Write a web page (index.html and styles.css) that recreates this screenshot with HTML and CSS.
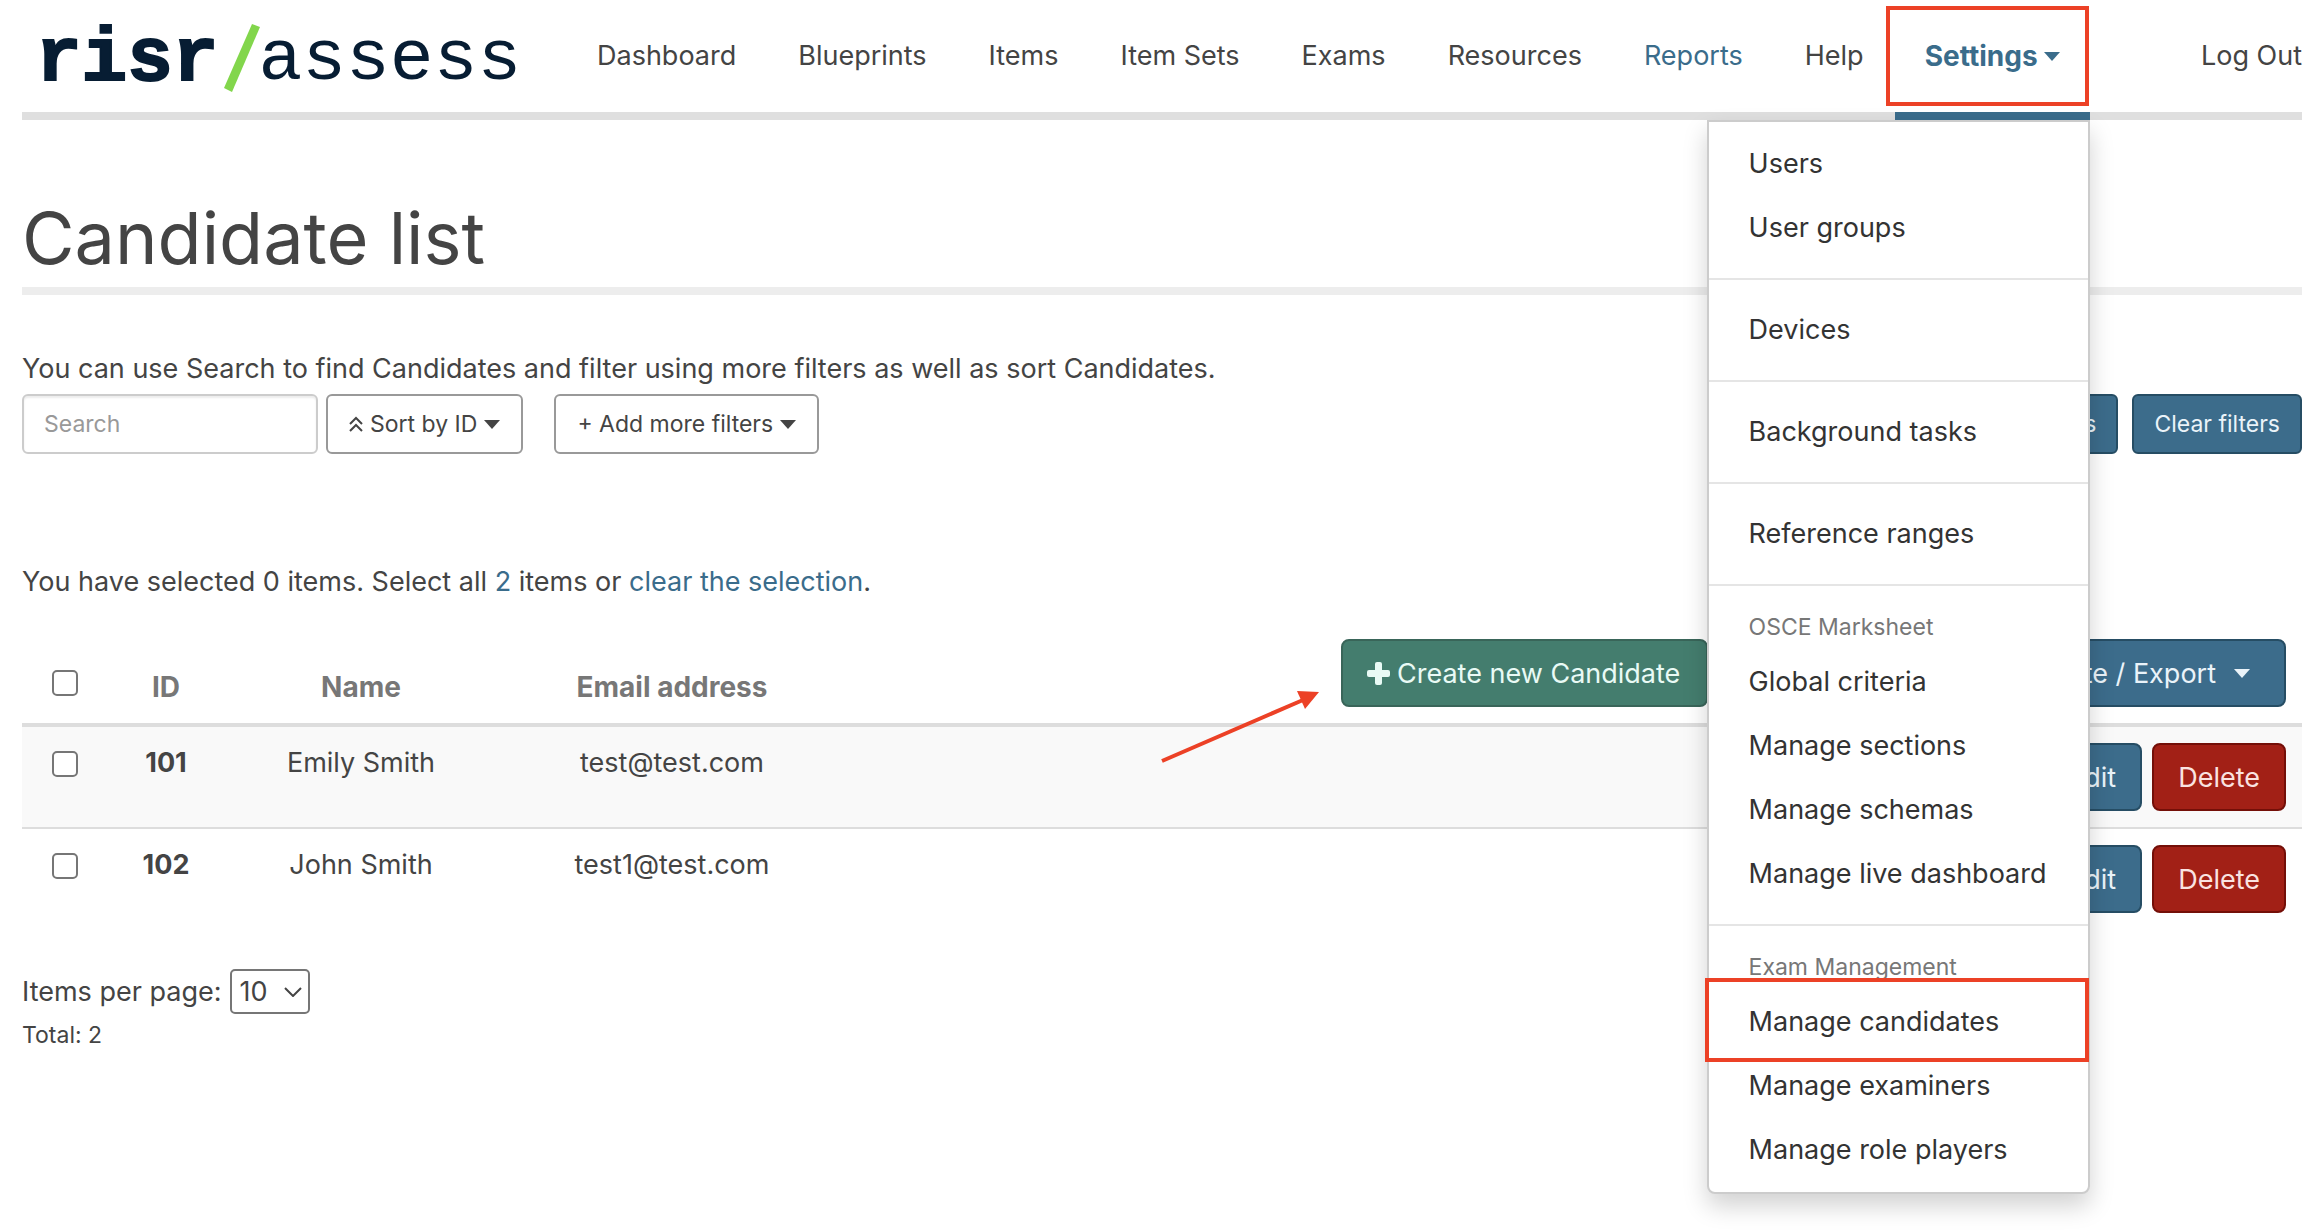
FILE: index.html
```html
<!DOCTYPE html>
<html lang="en">
<head>
    <meta charset="UTF-8">
    <meta name="viewport" content="width=device-width, initial-scale=1.0">
    <title>Candidate list - risr/assess</title>
    <link rel="stylesheet" href="styles.css">
</head>
<body>
    <header class="header">
        <a class="logo" href="#" aria-label="risr/assess">
            <span class="logo-risr">risr</span>
            <svg class="logo-slash" width="36" height="68" viewBox="0 0 36 68"><path d="M28 0 L36 3 L8 68 L0 64 Z" fill="#82d64c"/></svg>
            <span class="logo-assess">assess</span>
        </a>
        <nav class="nav">
            <a href="#">Dashboard</a>
            <a href="#">Blueprints</a>
            <a href="#">Items</a>
            <a href="#">Item Sets</a>
            <a href="#">Exams</a>
            <a href="#">Resources</a>
            <a href="#" class="highlight">Reports</a>
            <a href="#">Help</a>
            <div class="dropdown">
                <button class="dropdown-toggle">Settings<span class="caret"></span></button>
                <div class="dropdown-menu">
                    <div class="menu-group">
                        <a href="#">Users</a>
                        <a href="#">User groups</a>
                    </div>
                    <div class="menu-group"><a href="#">Devices</a></div>
                    <div class="menu-group"><a href="#">Background tasks</a></div>
                    <div class="menu-group"><a href="#">Reference ranges</a></div>
                    <div class="menu-group">
                        <span class="menu-header">OSCE Marksheet</span>
                        <a href="#">Global criteria</a>
                        <a href="#">Manage sections</a>
                        <a href="#">Manage schemas</a>
                        <a href="#">Manage live dashboard</a>
                    </div>
                    <div class="menu-group">
                        <span class="menu-header">Exam Management</span>
                        <a href="#" class="marked">Manage candidates</a>
                        <a href="#">Manage examiners</a>
                        <a href="#">Manage role players</a>
                    </div>
                </div>
            </div>
        </nav>
        <a class="logout" href="#">Log Out</a>
    </header>

    <main>
        <h1>Candidate list</h1>

        <p class="intro">You can use Search to find Candidates and filter using more filters as well as sort Candidates.</p>
        <div class="filters">
            <input type="text" class="search" placeholder="Search" aria-label="Search">
            <button class="btn-filter">
                <svg width="14" height="16" viewBox="0 0 14 16" fill="none" stroke="#444" stroke-width="2"><path d="M1 8 L7 2 L13 8 M1 15 L7 9 L13 15"/></svg>
                Sort by ID<span class="caret"></span>
            </button>
            <button class="btn-filter btn-more">+ Add more filters<span class="caret"></span></button>
            <div class="filters-right">
                <button class="btn-filter btn-blue">Apply filters</button>
                <button class="btn-filter btn-blue">Clear filters</button>
            </div>
        </div>

        <p class="selection">You have selected 0 items. Select all <a href="#">2</a> items or <a href="#">clear the selection</a>.</p>

        <table class="candidates">
            <colgroup>
                <col class="col-check">
                <col class="col-id">
                <col class="col-name">
                <col class="col-email">
                <col>
            </colgroup>
            <thead>
                <tr>
                    <th><input type="checkbox" aria-label="Select all"></th>
                    <th>ID</th>
                    <th>Name</th>
                    <th>Email address</th>
                    <th>
                        <div class="actions actions-head">
                            <button class="btn btn-green">
                                <svg width="23" height="23" viewBox="0 0 23 23" fill="#e9faf5"><rect x="8" y="0" width="7" height="23" rx="2"/><rect x="0" y="8" width="23" height="7" rx="2"/></svg>
                                Create new Candidate
                            </button>
                            <button class="btn btn-blue">Create / Export<span class="caret"></span></button>
                            <svg class="arrow" width="160" height="72" viewBox="0 0 160 72"><path d="M1 70 L142 9" stroke="#ec4126" stroke-width="4"/><path d="M136 0 L158 1 L144 18 Z" fill="#ec4126"/></svg>
                        </div>
                    </th>
                </tr>
            </thead>
            <tbody>
                <tr>
                    <td><input type="checkbox" aria-label="Select 101"></td>
                    <td class="id">101</td>
                    <td>Emily Smith</td>
                    <td>test@test.com</td>
                    <td>
                        <div class="actions">
                            <button class="btn btn-blue">Edit</button>
                            <button class="btn btn-red">Delete</button>
                        </div>
                    </td>
                </tr>
                <tr>
                    <td><input type="checkbox" aria-label="Select 102"></td>
                    <td class="id">102</td>
                    <td>John Smith</td>
                    <td>test1@test.com</td>
                    <td>
                        <div class="actions">
                            <button class="btn btn-blue">Edit</button>
                            <button class="btn btn-red">Delete</button>
                        </div>
                    </td>
                </tr>
            </tbody>
        </table>

        <div class="paging">
            <label for="per-page">Items per page:</label>
            <div class="select-wrap">
                <select id="per-page">
                    <option>10</option>
                    <option>25</option>
                    <option>50</option>
                </select>
                <svg width="18" height="10" viewBox="0 0 18 10" fill="none" stroke="#444" stroke-width="2"><path d="M1 1 L9 9 L17 1"/></svg>
            </div>
        </div>
        <p class="total">Total: 2</p>
    </main>
</body>
</html>
```
FILE: styles.css
```css
* {
    box-sizing: border-box;
}

body {
    min-height: 100vh;
    margin: 0;
    padding: 0 16px 40px 22px;
    background-color: #fff;
    color: #444;
    font-family: Inter, "Liberation Sans", sans-serif;
    font-size: 27px;
    line-height: 40px;
}

a {
    color: #3a6c8b;
    text-decoration: none;
}

button,
input,
select {
    font-family: inherit;
    color: inherit;
}

p {
    margin: 0;
}

.caret {
    display: inline-block;
    border-left: 8px solid transparent;
    border-right: 8px solid transparent;
    border-top: 9px solid currentColor;
}

/* Header */
.header {
    display: flex;
    align-items: center;
    height: 120px;
    border-bottom: 8px solid #dfdfdf;
}

.logo {
    display: flex;
    align-items: center;
    width: 544px;
    padding: 8px 0 0 14px;
    color: #071d33;
    font-family: "Liberation Mono", monospace;
    line-height: 112px;
}

.logo-risr {
    font-size: 76px;
    font-weight: bold;
    -webkit-text-stroke: 2px #071d33;
}

.logo-slash {
    margin: 0 -2px 4px 6px;
}

.logo-assess {
    font-size: 73px;
}

/* the active item's underline lies over the header border */
.nav {
    display: flex;
    margin-bottom: -8px;
}

.nav > a {
    padding: 0 31px;
    color: #444;
    line-height: 112px;
}

.nav > a.highlight {
    color: #3a6c8b;
}

.logout {
    margin-left: auto;
    color: #444;
}

.dropdown {
    position: relative;
}

.dropdown-toggle {
    display: flex;
    align-items: center;
    gap: 6px;
    height: 120px;
    padding: 0 30px;
    border: none;
    border-bottom: 8px solid #3a6c8b;
    background: none;
    color: #3a6c8b;
    font-size: 28px;
    font-weight: bold;
}

.dropdown-toggle::after {
    content: "";
    position: absolute;
    top: 6px;
    right: 1px;
    bottom: 14px;
    left: -9px;
    border: 4px solid #ec4126;
}

.dropdown-menu {
    position: absolute;
    top: 120px;
    right: 0;
    z-index: 1;
    width: 383px;
    padding: 10px 0;
    border: 2px solid #ccc;
    border-radius: 0 0 8px 8px;
    background-color: #fff;
    background-clip: padding-box;
    box-shadow: 0 12px 24px rgba(0, 0, 0, 0.18);
}

.menu-group + .menu-group {
    margin-top: 18px;
    padding-top: 18px;
    border-top: 2px solid #e5e5e5;
}

.menu-group a {
    display: block;
    padding: 12px 0 12px 40px;
    color: #333;
}

.menu-header {
    display: block;
    padding: 3px 0 3px 40px;
    color: #777;
    font-size: 23px;
}

.menu-group a.marked {
    position: relative;
}

.menu-group a.marked::after {
    content: "";
    position: absolute;
    top: -12px;
    right: -1px;
    bottom: -8px;
    left: -4px;
    border: 4px solid #ec4126;
}

/* Page title and filters */
h1 {
    margin: 78px 0 54px;
    padding-bottom: 9px;
    border-bottom: 8px solid #ededed;
    font-size: 72px;
    font-weight: normal;
    line-height: 80px;
}

.filters {
    display: flex;
    gap: 8px;
    margin-top: 5px;
}

.search {
    width: 296px;
    height: 60px;
    padding: 0 20px;
    border: 2px solid #ccc;
    border-radius: 6px;
    box-shadow: inset 0 2px 2px rgba(0, 0, 0, 0.08);
    font-size: 23px;
}

.search::placeholder {
    color: #999;
}

.btn-filter {
    display: flex;
    align-items: center;
    gap: 7px;
    height: 60px;
    padding: 0 21px;
    border: 2px solid #999;
    border-radius: 6px;
    background-color: #fff;
    font-size: 23px;
}

.btn-more {
    margin-left: 23px;
}

.filters-right {
    display: flex;
    gap: 14px;
    margin-left: auto;
}

.btn-filter.btn-blue {
    padding: 0 20px;
}

.selection {
    margin: 108px 0 21px;
}

/* Buttons */
.btn {
    display: flex;
    align-items: center;
    gap: 7px;
    height: 68px;
    padding: 0 24px;
    border: 2px solid;
    border-radius: 8px;
    font-size: 27px;
}

.btn-blue {
    background-color: #3c6c8b;
    border-color: #264d64;
    color: #eaf3f9;
}

.btn-green {
    padding: 0 26px 0 24px;
    background-color: #447d6e;
    border-color: #396559;
    color: #e9faf5;
}

.btn-red {
    background-color: #a22016;
    border-color: #740f08;
    color: #fae3e1;
}

/* Candidates table */
.candidates {
    width: 100%;
    table-layout: fixed;
    border-collapse: collapse;
    text-align: center;
}

.col-check {
    width: 86px;
}

.col-id {
    width: 116px;
}

.col-name {
    width: 274px;
}

.col-email {
    width: 348px;
}

.candidates th,
.candidates td {
    padding: 16px;
}

.candidates th {
    vertical-align: bottom;
    border-bottom: 4px solid #ddd;
    color: #777;
    font-size: 28px;
}

.candidates td {
    vertical-align: top;
}

.candidates tbody tr:first-child {
    background-color: #f9f9f9;
    border-bottom: 2px solid #ddd;
}

.candidates .id {
    font-weight: bold;
}

.candidates input {
    appearance: none;
    display: block;
    width: 26px;
    height: 26px;
    margin: 8px auto 0;
    border: 2px solid #767676;
    border-radius: 5px;
    background-color: #fff;
}

.candidates th input {
    margin: 0 auto 11px;
}

.actions {
    display: flex;
    justify-content: flex-end;
    gap: 10px;
}

.actions-head {
    position: relative;
    justify-content: space-between;
    width: 945px;
    margin-left: auto;
}

.actions-head .btn-blue {
    gap: 18px;
    padding-right: 34px;
}

.arrow {
    position: absolute;
    top: 52px;
    left: -180px;
}

/* Paging */
.paging {
    display: flex;
    align-items: center;
    gap: 8px;
    margin-top: 40px;
}

.select-wrap {
    position: relative;
}

.select-wrap select {
    appearance: none;
    display: block;
    width: 80px;
    height: 45px;
    padding: 0 8px;
    border: 2px solid #767676;
    border-radius: 5px;
    background-color: #fff;
    font-size: 27px;
}

.select-wrap svg {
    position: absolute;
    top: 18px;
    right: 8px;
    pointer-events: none;
}

.total {
    margin-top: 6px;
    font-size: 23px;
    line-height: 30px;
}
```
